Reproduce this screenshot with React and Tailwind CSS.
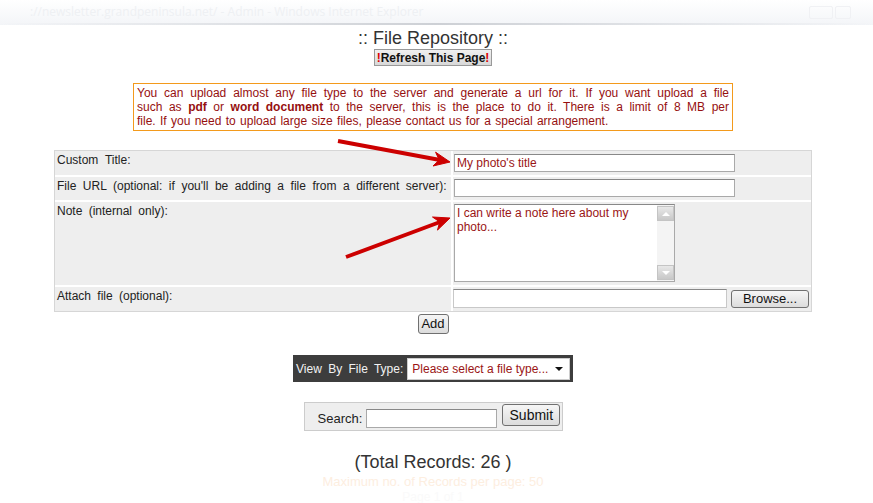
import React from 'react';

const font = { fontFamily: '"Liberation Sans", Arial, sans-serif' };

const INFO_LINES = [
  ['You can upload almost any file type to the server and generate a url for it. If you want upload a file'],
  [
    'such as ',
    <b key="pdf">pdf</b>,
    ' or ',
    <b key="word">word document</b>,
    ' to the server, this is the place to do it. There is a limit of 8 MB per',
  ],
];

const Btn = ({ className = '', children }) => (
  <div
    className={`flex items-center justify-center whitespace-nowrap rounded-[3px] border border-[#707070] bg-gradient-to-b from-[#f6f6f6] to-[#dcdcdc] text-[13px] text-[#111] ${className}`}
  >
    {children}
  </div>
);

const TextBox = ({ className = '', value = '' }) => (
  <div
    className={`flex items-center border border-[#a9a9a9] border-t-[#888] bg-white px-[2px] text-[12px] text-[#9a1515] ${className}`}
  >
    {value}
  </div>
);

const Arrows = () => (
  <svg className="pointer-events-none absolute left-0 top-0" width="873" height="503">
    <g fill="#cc0000" stroke="#cc0000">
      <line x1="338" y1="141" x2="440" y2="160" strokeWidth="4" />
      <polygon points="450,162 433,166 439.2,160 435.6,152.2" strokeWidth="1" />
      <line x1="346" y1="257" x2="440" y2="222" strokeWidth="4" />
      <polygon points="450,218 437.5,230.1 439.7,221.9 432.5,217" strokeWidth="1" />
    </g>
  </svg>
);

export default function App() {
  return (
    <div className="relative h-[503px] w-[873px] overflow-hidden bg-white" style={font}>
      {/* faded window title bar */}
      <div className="relative h-[25px] bg-gradient-to-b from-white to-[#f3f5f8]">
        <div
          className="pl-[30px] pt-[5px] text-[12px] leading-[14px] text-[#eef0f3]"
          style={{ fontFamily: '"Open Sans", sans-serif' }}
        >
          ://newsletter.grandpeninsula.net/ - Admin - Windows Internet Explorer
        </div>
        <div className="absolute right-[22px] top-[6px] flex gap-[2px]">
          <div className="h-[13px] w-[24px] rounded-[2px] border border-[#f0f1f4]" />
          <div className="h-[13px] w-[16px] rounded-[2px] border border-[#f0f1f4]" />
        </div>
        <div className="absolute bottom-0 left-0 h-[2px] w-full bg-gradient-to-r from-transparent via-[#cdd0d5] to-transparent" />
      </div>

      <div className="flex w-[866px] flex-col items-center">
        <div className="mt-[3px] text-[18px] leading-[21px] text-[#333]">:: File Repository ::</div>
        <div className="flex h-[17px] items-center justify-center whitespace-nowrap border border-[#999] bg-gradient-to-b from-[#f0f0f0] to-[#d8d8d8] px-[2px] text-[12px] font-bold text-[#111]">
          <span className="text-[#d00]">!</span>
          <span>Refresh This Page</span>
          <span className="text-[#d00]">!</span>
        </div>

        {/* info box */}
        <div className="mt-[17px] w-[600px] border border-[#f39a1c] px-[3px] py-[2px] text-[12px] leading-[14px] text-[#961010] [word-spacing:1px]">
          {INFO_LINES.map((line, i) => (
            <div key={i} className="text-justify [text-align-last:justify]">
              {line}
            </div>
          ))}
          <div>file. If you need to upload large size files, please contact us for a special arrangement.</div>
        </div>

        {/* form table */}
        <div className="mt-[19px] grid w-[758px] grid-cols-[396px_358px] grid-rows-[24px_23px_83px_24px] gap-[2px] border border-[#d6d6d6] bg-white text-[12px] leading-[14px] text-[#222]">
          <div className="bg-[#eee] pl-[2px] pt-[2px] [word-spacing:3.5px]">Custom Title:</div>
          <div className="bg-[#eee] pl-[1px] pt-[3px]">
            <TextBox className="h-[18px] w-[281px]" value="My photo's title" />
          </div>
          <div className="bg-[#eee] pl-[2px] pt-[2px] [word-spacing:3.2px]">
            File URL (optional: if you'll be adding a file from a different server):
          </div>
          <div className="bg-[#eee] pl-[1px] pt-[2px]">
            <TextBox className="h-[18px] w-[281px]" />
          </div>
          <div className="bg-[#eee] pl-[2px] pt-[2px] [word-spacing:3px]">Note (internal only):</div>
          <div className="bg-[#eee] pl-[1px] pt-[2px]">
            <div className="flex h-[78px] w-[221px] border border-[#a9a9a9] border-t-[#888] bg-white">
              <div className="flex-1 px-[2px] pt-[1px] text-[12px] leading-[14px] text-[#9a1515]">
                I can write a note here about my photo...
              </div>
              <div className="flex w-[17px] flex-col justify-between bg-[#f4f4f4] py-[1px]">
                <div className="flex h-[15px] items-center justify-center border border-[#c4c4c4] bg-gradient-to-b from-[#e8e8e8] to-[#c8c8c8]">
                  <div className="h-0 w-0 border-x-[4px] border-b-[4px] border-x-transparent border-b-white" />
                </div>
                <div className="flex h-[15px] items-center justify-center border border-[#c4c4c4] bg-gradient-to-b from-[#e8e8e8] to-[#c8c8c8]">
                  <div className="h-0 w-0 border-x-[4px] border-t-[4px] border-x-transparent border-t-white" />
                </div>
              </div>
            </div>
          </div>
          <div className="bg-[#eee] pl-[2px] pt-[2px] [word-spacing:3px]">Attach file (optional):</div>
          <div className="flex items-start gap-[4px] bg-[#eee] pt-[2px]">
            <TextBox className="h-[19px] w-[274px] border-[#c8c8c8]" />
            <Btn className="mt-[1px] h-[18px] w-[78px]">Browse...</Btn>
          </div>
        </div>

        <Btn className="mt-[2px] h-[20px] w-[31px]">Add</Btn>

        {/* view by file type */}
        <div className="mt-[21px] flex h-[27px] w-[280px] items-start bg-[#3d3d3d] p-[3px] text-[12px]">
          <span className="mt-[2px] text-[#f2f2f2] [word-spacing:3px]">View By File Type:</span>
          <div className="ml-[4px] flex h-[22px] flex-1 items-center justify-between border border-[#ccc] bg-white pl-[4px] pr-[6px] text-[#9a1515]">
            <span>Please select a file type...</span>
            <div className="h-0 w-0 border-x-[4px] border-t-[4px] border-x-transparent border-t-[#111]" />
          </div>
        </div>

        {/* search */}
        <div className="mt-[20px] flex h-[29px] w-[259px] items-start border border-[#ccc] bg-[#eee] text-[13px] text-[#222]">
          <span className="ml-[13px] mt-[8px] leading-[15px]">Search:</span>
          <TextBox className="ml-[4px] mt-[6px] h-[19px] w-[131px]" />
          <Btn className="ml-[5px] mt-[1px] h-[22px] w-[58px] text-[14px]">Submit</Btn>
        </div>

        <div className="mt-[20px] text-[18px] leading-[22px] text-[#333]">(Total Records: 26 )</div>
        <div className="mt-[1px] text-[13px] leading-[16px] text-[#fdeedf]">Maximum no. of Records per page: 50</div>
        <div className="text-[12px] leading-[14px] text-[#fafafa]">Page 1 of 1</div>
      </div>

      <Arrows />
    </div>
  );
}
